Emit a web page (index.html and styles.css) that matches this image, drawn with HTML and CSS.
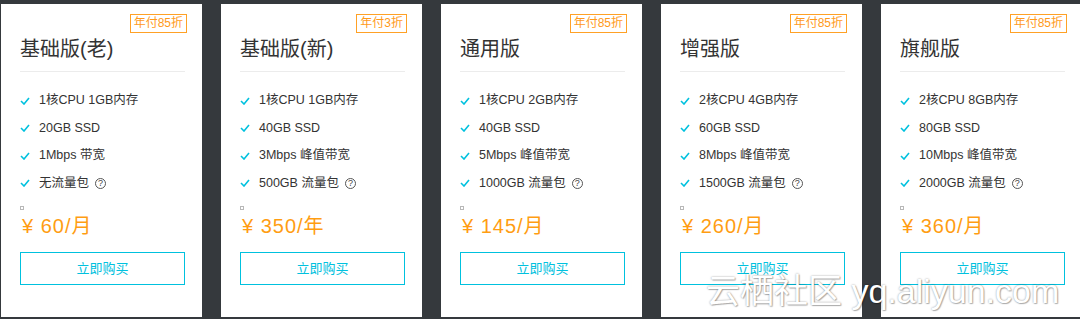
FILE: index.html
```html
<!DOCTYPE html>
<html lang="zh-CN">
<head>
<meta charset="utf-8">
<title>云服务器套餐</title>
<link rel="stylesheet" href="styles.css">
</head>
<body>
<div class="plans">
  <div class="card">
    <span class="badge">年付85折</span>
    <h3 class="title">基础版(老)</h3>
    <ul class="features">
      <li><svg class="check" viewBox="0 0 10 8"><polyline points="1,4 4,7 9,1"/></svg>1核CPU 1GB内存</li>
      <li><svg class="check" viewBox="0 0 10 8"><polyline points="1,4 4,7 9,1"/></svg>20GB SSD</li>
      <li><svg class="check" viewBox="0 0 10 8"><polyline points="1,4 4,7 9,1"/></svg>1Mbps 带宽</li>
      <li><svg class="check" viewBox="0 0 10 8"><polyline points="1,4 4,7 9,1"/></svg>无流量包<span class="help">?</span></li>
    </ul>
    <i class="dot"></i>
    <div class="price">¥ 60/月</div>
    <a class="buy">立即购买</a>
  </div>
  <div class="card">
    <span class="badge">年付3折</span>
    <h3 class="title">基础版(新)</h3>
    <ul class="features">
      <li><svg class="check" viewBox="0 0 10 8"><polyline points="1,4 4,7 9,1"/></svg>1核CPU 1GB内存</li>
      <li><svg class="check" viewBox="0 0 10 8"><polyline points="1,4 4,7 9,1"/></svg>40GB SSD</li>
      <li><svg class="check" viewBox="0 0 10 8"><polyline points="1,4 4,7 9,1"/></svg>3Mbps 峰值带宽</li>
      <li><svg class="check" viewBox="0 0 10 8"><polyline points="1,4 4,7 9,1"/></svg>500GB 流量包<span class="help">?</span></li>
    </ul>
    <i class="dot"></i>
    <div class="price">¥ 350/年</div>
    <a class="buy">立即购买</a>
  </div>
  <div class="card">
    <span class="badge">年付85折</span>
    <h3 class="title">通用版</h3>
    <ul class="features">
      <li><svg class="check" viewBox="0 0 10 8"><polyline points="1,4 4,7 9,1"/></svg>1核CPU 2GB内存</li>
      <li><svg class="check" viewBox="0 0 10 8"><polyline points="1,4 4,7 9,1"/></svg>40GB SSD</li>
      <li><svg class="check" viewBox="0 0 10 8"><polyline points="1,4 4,7 9,1"/></svg>5Mbps 峰值带宽</li>
      <li><svg class="check" viewBox="0 0 10 8"><polyline points="1,4 4,7 9,1"/></svg>1000GB 流量包<span class="help">?</span></li>
    </ul>
    <i class="dot"></i>
    <div class="price">¥ 145/月</div>
    <a class="buy">立即购买</a>
  </div>
  <div class="card">
    <span class="badge">年付85折</span>
    <h3 class="title">增强版</h3>
    <ul class="features">
      <li><svg class="check" viewBox="0 0 10 8"><polyline points="1,4 4,7 9,1"/></svg>2核CPU 4GB内存</li>
      <li><svg class="check" viewBox="0 0 10 8"><polyline points="1,4 4,7 9,1"/></svg>60GB SSD</li>
      <li><svg class="check" viewBox="0 0 10 8"><polyline points="1,4 4,7 9,1"/></svg>8Mbps 峰值带宽</li>
      <li><svg class="check" viewBox="0 0 10 8"><polyline points="1,4 4,7 9,1"/></svg>1500GB 流量包<span class="help">?</span></li>
    </ul>
    <i class="dot"></i>
    <div class="price">¥ 260/月</div>
    <a class="buy">立即购买</a>
  </div>
  <div class="card">
    <span class="badge">年付85折</span>
    <h3 class="title">旗舰版</h3>
    <ul class="features">
      <li><svg class="check" viewBox="0 0 10 8"><polyline points="1,4 4,7 9,1"/></svg>2核CPU 8GB内存</li>
      <li><svg class="check" viewBox="0 0 10 8"><polyline points="1,4 4,7 9,1"/></svg>80GB SSD</li>
      <li><svg class="check" viewBox="0 0 10 8"><polyline points="1,4 4,7 9,1"/></svg>10Mbps 峰值带宽</li>
      <li><svg class="check" viewBox="0 0 10 8"><polyline points="1,4 4,7 9,1"/></svg>2000GB 流量包<span class="help">?</span></li>
    </ul>
    <i class="dot"></i>
    <div class="price">¥ 360/月</div>
    <a class="buy">立即购买</a>
  </div>
</div>
<div class="watermark">云栖社区 yq.aliyun.com</div>
</body>
</html>
```

FILE: styles.css
```css
html, body {
  margin: 0;
  padding: 0;
}
body {
  width: 1080px;
  height: 319px;
  overflow: hidden;
  background: #35393d;
  font-family: "Liberation Sans", "Noto Sans CJK SC", sans-serif;
  color: #333;
  position: relative;
}
.plans {
  display: flex;
  gap: 19px;
  padding: 4px 0 0 1px;
}
.card {
  flex: 0 0 201px;
  box-sizing: border-box;
  height: 313px;
  background: #fff;
  padding: 31px 17px 0 19px;
  position: relative;
}
.badge {
  position: absolute;
  top: 10px;
  right: 15px;
  height: 19px;
  box-sizing: border-box;
  border: 1px solid #ffa126;
  padding: 0 3px;
  font-size: 12px;
  line-height: 17px;
  color: #ff9a1a;
}
.title {
  margin: 0;
  font-size: 20px;
  font-weight: normal;
  line-height: 28px;
  padding-bottom: 8px;
  border-bottom: 1px solid #ececec;
  color: #333;
}
.features {
  list-style: none;
  margin: 15px 0 0;
  padding: 0;
}
.features li {
  font-size: 12.5px;
  line-height: 27.5px;
  height: 27.5px;
  display: flex;
  align-items: center;
  color: #333;
}
.check {
  width: 10px;
  height: 8px;
  margin-right: 9px;
  fill: none;
  stroke: #00c1de;
  stroke-width: 1.6;
}
.help {
  display: inline-block;
  width: 11px;
  height: 11px;
  box-sizing: border-box;
  border: 1px solid #555;
  border-radius: 50%;
  font-size: 9px;
  line-height: 9px;
  text-align: center;
  margin-left: 6px;
  color: #444;
}
.dot {
  display: block;
  width: 4px;
  height: 4px;
  box-sizing: border-box;
  border: 1px solid #b8b8b8;
  margin-top: 9px;
}
.price {
  margin-top: 4px;
  padding-left: 2px;
  font-size: 20px;
  line-height: 24px;
  letter-spacing: 1px;
  color: #ff9d12;
}
.buy {
  display: block;
  margin-top: 14px;
  height: 33px;
  box-sizing: border-box;
  border: 1px solid #00c1de;
  padding: 7px 0;
  text-align: center;
  font-size: 13px;
  line-height: 17px;
  color: #00c1de;
}
.watermark {
  position: absolute;
  left: 706px;
  top: 278px;
  font-size: 34px;
  line-height: 26px;
  white-space: nowrap;
  color: #fff;
  text-shadow: 0 0 2px rgba(0, 0, 0, 0.4), 1px 1px 1px rgba(0, 0, 0, 0.25);
}
```
